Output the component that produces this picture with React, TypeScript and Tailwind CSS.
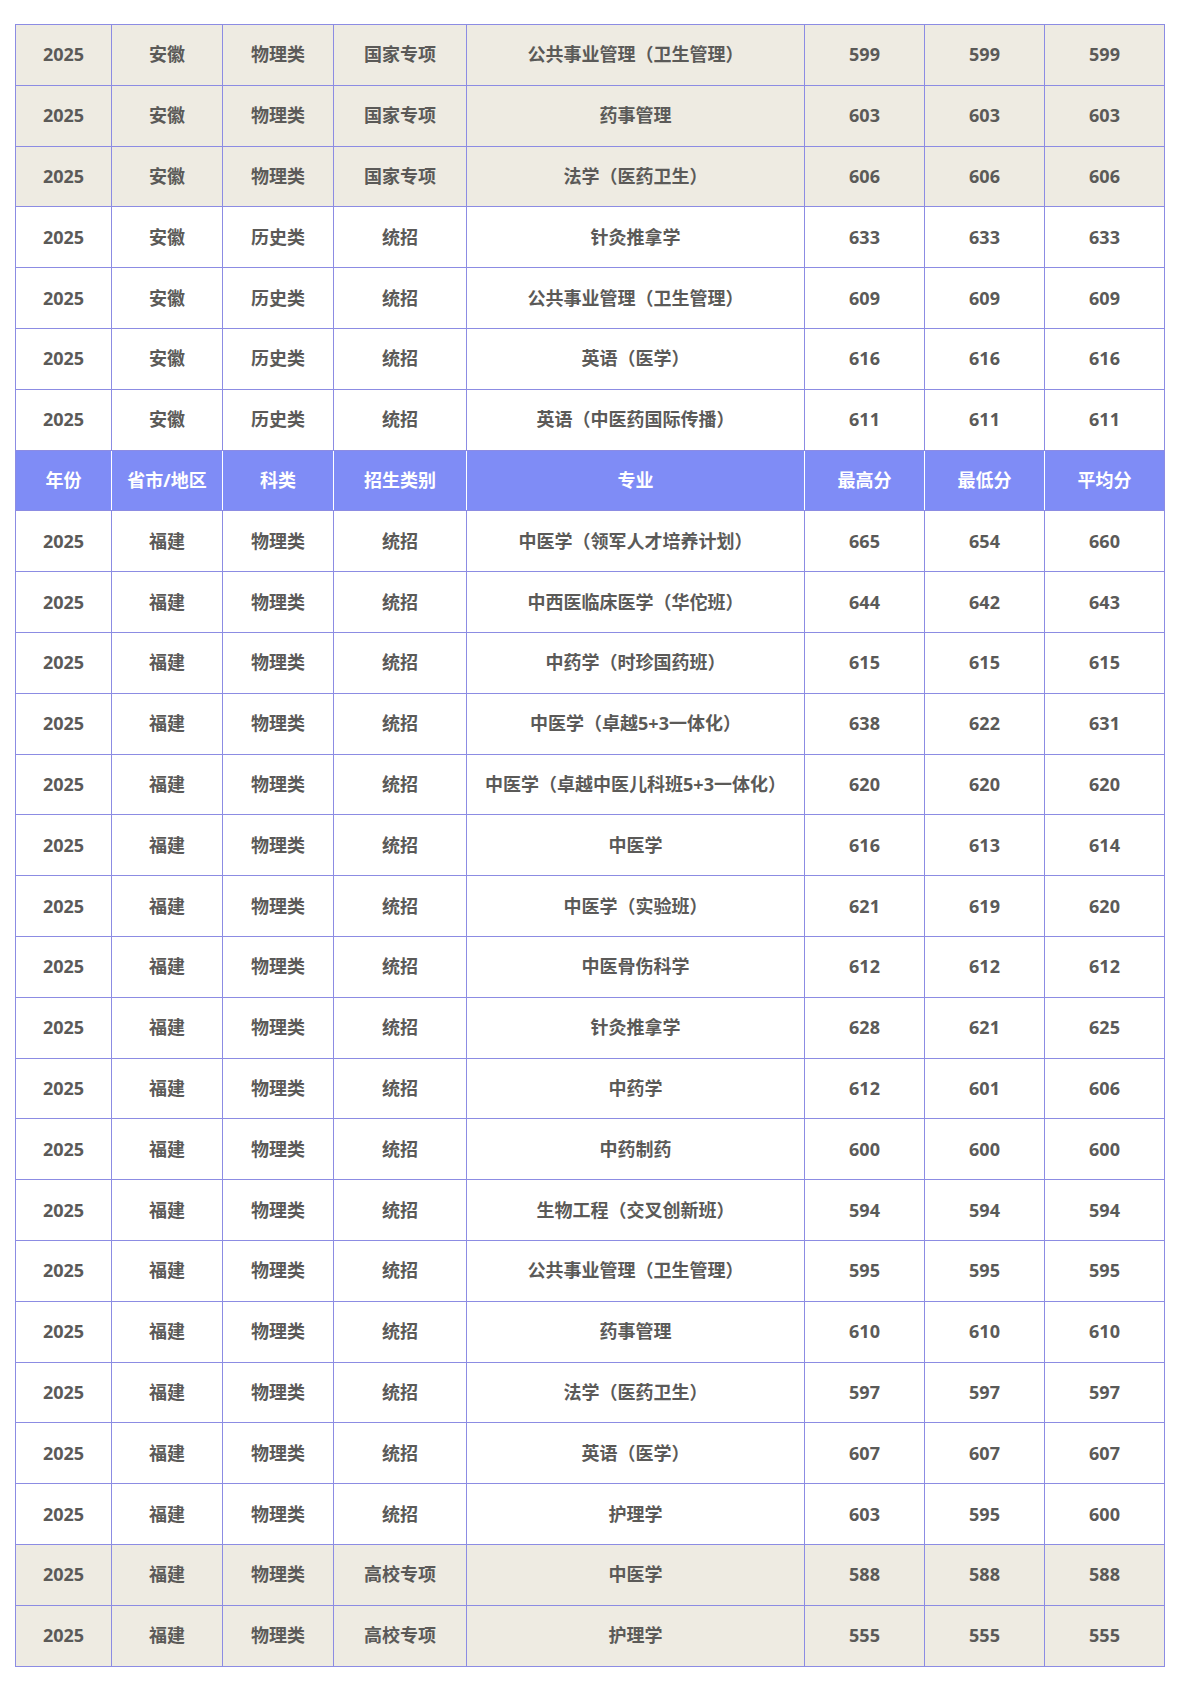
const shade = 'bg-[#eeebe2]';

type Row = [string, string, string, string, string, string, string, string, boolean?];

const top: Row[] = [
  ['2025', '安徽', '物理类', '国家专项', '公共事业管理（卫生管理）', '599', '599', '599', true],
  ['2025', '安徽', '物理类', '国家专项', '药事管理', '603', '603', '603', true],
  ['2025', '安徽', '物理类', '国家专项', '法学（医药卫生）', '606', '606', '606', true],
  ['2025', '安徽', '历史类', '统招', '针灸推拿学', '633', '633', '633'],
  ['2025', '安徽', '历史类', '统招', '公共事业管理（卫生管理）', '609', '609', '609'],
  ['2025', '安徽', '历史类', '统招', '英语（医学）', '616', '616', '616'],
  ['2025', '安徽', '历史类', '统招', '英语（中医药国际传播）', '611', '611', '611'],
];

const fujian: [string, string, string, string][] = [
  ['中医学（领军人才培养计划）', '665', '654', '660'],
  ['中西医临床医学（华佗班）', '644', '642', '643'],
  ['中药学（时珍国药班）', '615', '615', '615'],
  ['中医学（卓越5+3一体化）', '638', '622', '631'],
  ['中医学（卓越中医儿科班5+3一体化）', '620', '620', '620'],
  ['中医学', '616', '613', '614'],
  ['中医学（实验班）', '621', '619', '620'],
  ['中医骨伤科学', '612', '612', '612'],
  ['针灸推拿学', '628', '621', '625'],
  ['中药学', '612', '601', '606'],
  ['中药制药', '600', '600', '600'],
  ['生物工程（交叉创新班）', '594', '594', '594'],
  ['公共事业管理（卫生管理）', '595', '595', '595'],
  ['药事管理', '610', '610', '610'],
  ['法学（医药卫生）', '597', '597', '597'],
  ['英语（医学）', '607', '607', '607'],
  ['护理学', '603', '595', '600'],
];

const bottom: Row[] = [
  ['2025', '福建', '物理类', '高校专项', '中医学', '588', '588', '588', true],
  ['2025', '福建', '物理类', '高校专项', '护理学', '555', '555', '555', true],
];

const rows: Row[] = [
  ...fujian.map((f): Row => ['2025', '福建', '物理类', '统招', f[0], f[1], f[2], f[3]]),
  ...bottom,
];

const heads = ['年份', '省市/地区', '科类', '招生类别', '专业', '最高分', '最低分', '平均分'];
const widths = ['w-[96px]', 'w-[111px]', 'w-[111px]', 'w-[133px]', 'w-[338px]', 'w-[120px]', 'w-[120px]', 'w-[120px]'];

function DataRow({ r }: { r: Row }) {
  return (
    <tr className={r[8] ? shade : 'bg-white'}>
      {r.slice(0, 8).map((c, i) => (
        <td key={i} className="h-[60.8px] border border-[#8c8ce3] text-center align-middle p-0">
          {c as string}
        </td>
      ))}
    </tr>
  );
}

export default function App() {
  return (
    <div className="bg-white min-h-[1683px] pt-[24px] pl-[15px]">
      <table
        className="border-collapse table-fixed w-[1150px] text-[18px] font-bold text-[#5b5a58]"
        style={{ fontFamily: '"Open Sans", "Noto Sans CJK SC", sans-serif' }}
      >
        <colgroup>
          {widths.map((w, i) => (
            <col key={i} className={w} />
          ))}
        </colgroup>
        <tbody>
          {top.map((r, i) => (
            <DataRow key={'t' + i} r={r} />
          ))}
          <tr className="bg-[#7f8cf6] text-white">
            {heads.map((h, i) => (
              <td
                key={h}
                className={
                  'h-[60.8px] text-center align-middle p-0 border-y border-y-[#8c8ce3] ' +
                  (i === 0 ? 'border-l border-l-[#8c8ce3] ' : 'border-l border-l-white ') +
                  (i === 7 ? 'border-r border-r-[#8c8ce3]' : 'border-r border-r-white')
                }
              >
                {h}
              </td>
            ))}
          </tr>
          {rows.map((r, i) => (
            <DataRow key={'b' + i} r={r} />
          ))}
        </tbody>
      </table>
    </div>
  );
}
